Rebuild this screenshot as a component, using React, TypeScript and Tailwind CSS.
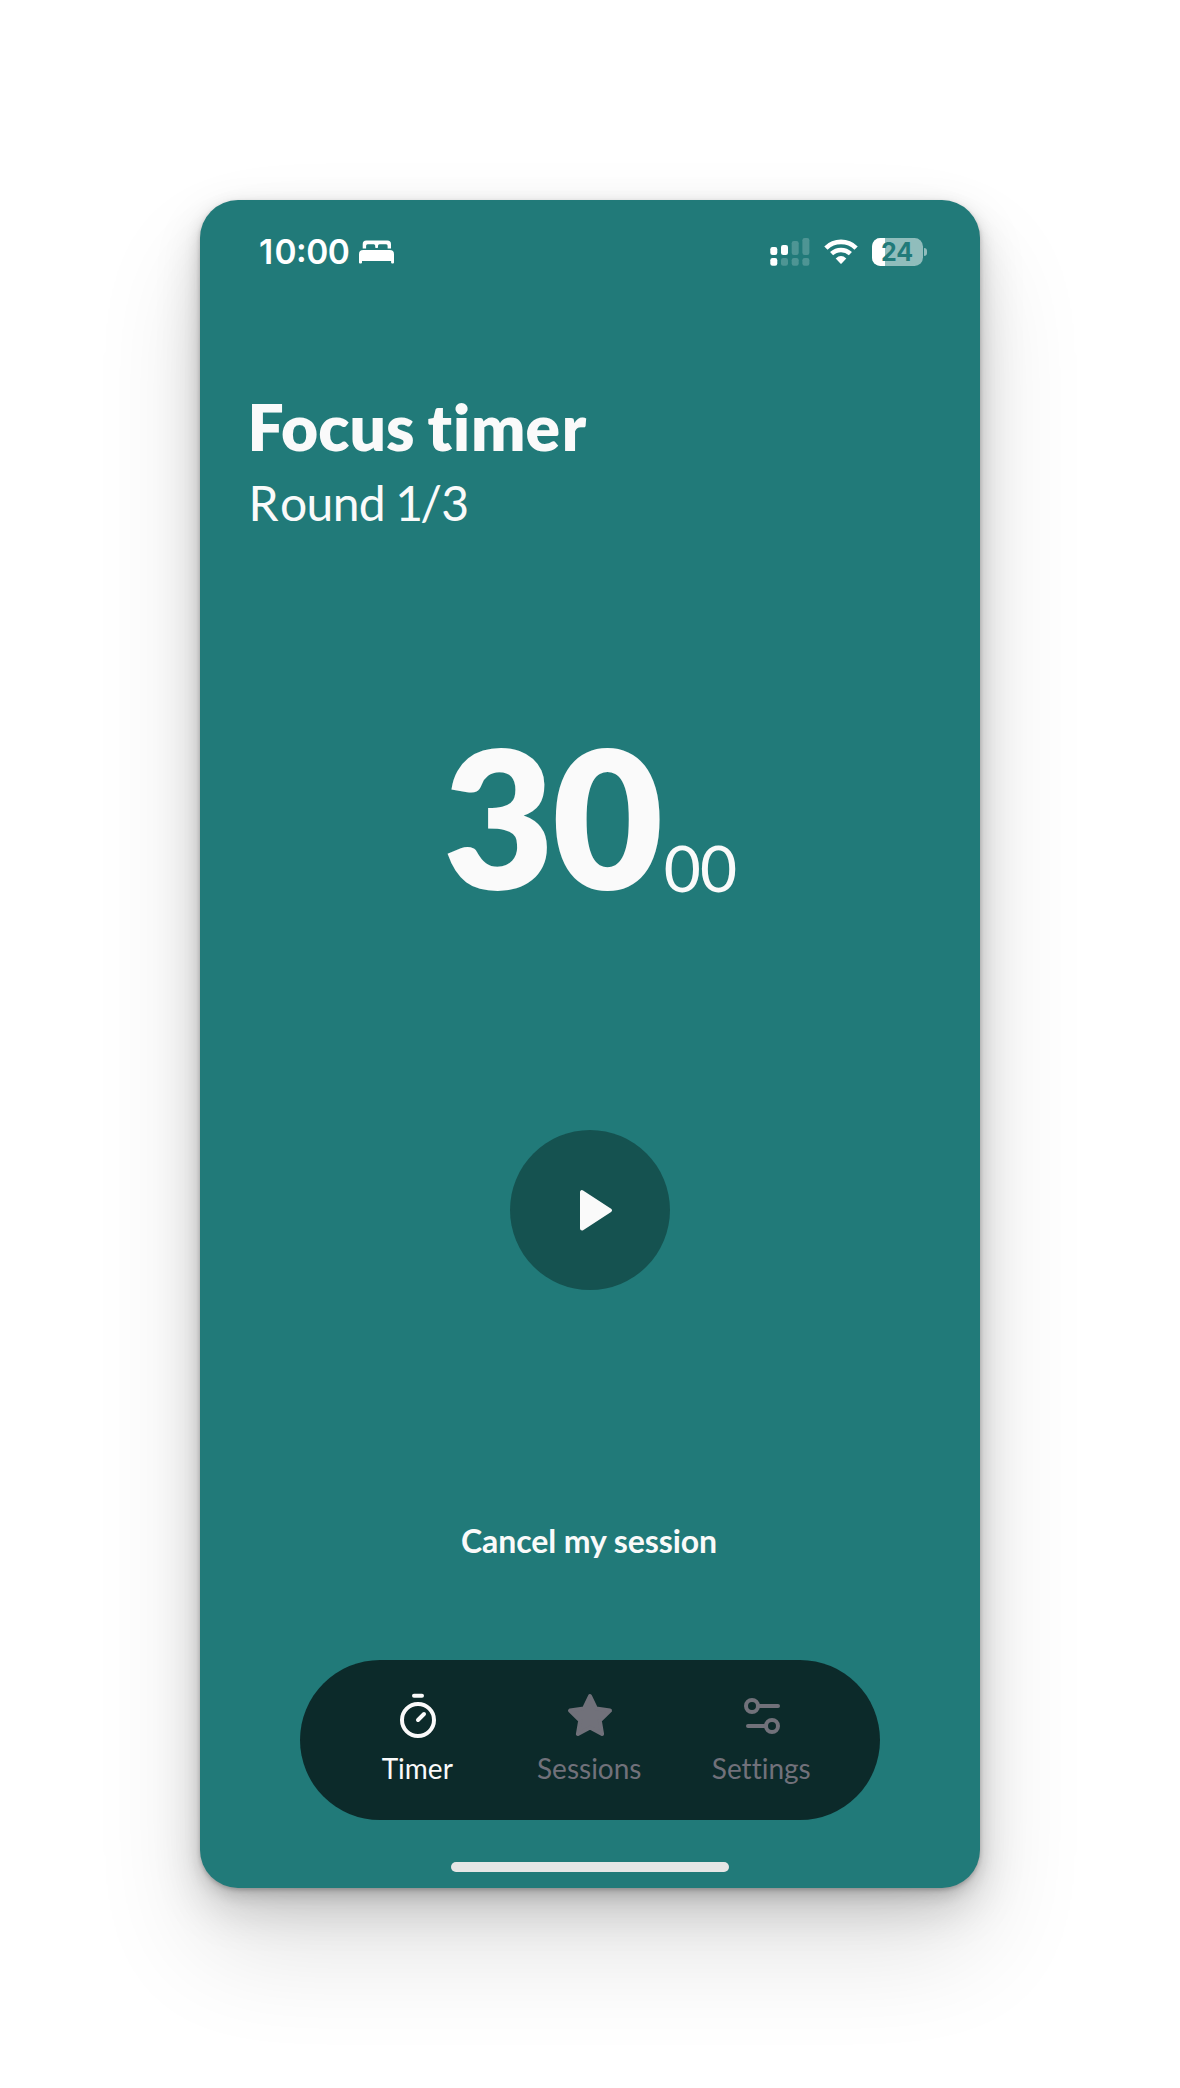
import React from "react";

function StatusBar() {
  return (
    <div className="mt-[26px] flex h-[52px] items-center pl-[59px] pr-[53px] text-white">
      <span className="w-[91px] whitespace-nowrap font-['Inter',sans-serif] text-[33.500px] font-semibold leading-[40px] tracking-[-0.500px]">
        <span className="tracking-[1.200px]">1</span>0<span className="relative -top-[2px]">:</span>00
      </span>
      <svg className="ml-[9px]" width="35" height="24" viewBox="0 0 35 24" fill="white">
        <path fillRule="evenodd" d="M3.700 8.400V4.200Q3.700.6 7.300.6H28.400Q32 .6 32 4.200V8.400H28.600V5.800Q28.600 4.300 27.100 4.300H20.500Q19 4.300 19 5.800V7.300Q19 8 18.300 8H16.900Q16.200 8 16.200 7.300V5.800Q16.200 4.300 14.700 4.300H8.600Q7.100 4.300 7.100 5.800V8.400Z" />
        <path d="M0 14.200Q0 10 4.200 10H30.800Q35 10 35 14.200V22.600q0 1-1 1h-.9q-1 0-1-1V21H3V22.600q0 1-1 1H1q-1 0-1-1z" />
      </svg>
      <svg className="ml-auto" width="40" height="28" viewBox="0 0 40 28" fill="white">
        <rect x="0.300" y="9" width="7" height="8" rx="2.200" />
        <rect x="11" y="7" width="7" height="10" rx="2.200" />
        <g opacity=".2">
          <rect x="21.700" y="3" width="7" height="14" rx="2.200" />
          <rect x="32.400" y="0" width="7" height="17" rx="2.200" />
          <rect x="11" y="20" width="7" height="7.700" rx="2.200" />
          <rect x="21.700" y="20" width="7" height="7.700" rx="2.200" />
          <rect x="32.400" y="20" width="7" height="7.700" rx="2.200" />
        </g>
        <rect x="0.300" y="20" width="7" height="7.700" rx="2.200" />
      </svg>
      <svg className="ml-[14px]" width="34" height="26" viewBox="0 0 34 26" fill="none">
        <path d="M1.900 9.100C10.300 .9 23.700 .9 32.100 9.100" stroke="white" strokeWidth="4.700" />
        <path d="M7.600 14.700C13 9.600 21 9.600 26.400 14.700" stroke="white" strokeWidth="4.500" />
        <path d="M11.700 19.400q5.300-4.600 10.600 0L17.600 24.400q-.6.500-1.200 0z" fill="white" />
      </svg>
      <div className="relative ml-[14px] h-7 w-[51px] overflow-hidden rounded-[8.500px] bg-white/50">
        <div className="h-full w-[13px] bg-white" />
        <span className="absolute left-[9px] top-0 font-['Inter',sans-serif] text-[25px] font-bold leading-[28px] text-[#217a79]">24</span>
      </div>
      <div className="ml-[1px] h-[8px] w-[3px] rounded-r-full bg-white/50" />
    </div>
  );
}

function TimerIcon() {
  return (
    <svg width="48" height="48" viewBox="0 0 48 48" fill="none" stroke="currentColor" strokeWidth="4" strokeLinecap="round">
      <circle cx="24" cy="28" r="16" />
      <path d="M20 3.800h8M24 28l6-6" />
    </svg>
  );
}

function StarIcon() {
  return (
    <svg width="48" height="48" viewBox="0 0 48 48" fill="currentColor" stroke="currentColor" strokeWidth="4" strokeLinejoin="round">
      <path d="M24 4l6 12.600 14 2-10.200 9.900 2.300 13.500L24 35.500 11.900 42l2.300-13.500L4 18.600l14-2z" />
    </svg>
  );
}

function SettingsIcon() {
  return (
    <svg width="48" height="48" viewBox="0 0 48 48" fill="none" stroke="currentColor" strokeWidth="4" strokeLinecap="round">
      <circle cx="14" cy="14" r="6" />
      <path d="M20 14h20M10 34h18" />
      <circle cx="34" cy="34" r="6" />
    </svg>
  );
}

function Tab({ icon, label, active = false }: { icon: React.ReactNode; label: string; active?: boolean }) {
  return (
    <button className={`flex w-[172px] flex-col items-center ${active ? "text-[#fafafa]" : "text-[#71717a]"}`}>
      {icon}
      <span className="mt-[11px] pr-[1.500px] text-[28px] leading-[34px]">{label}</span>
    </button>
  );
}

export default function App() {
  return (
    <div className="flex h-[2088px] w-[1180px] items-start justify-center overflow-hidden bg-white pt-[200px] font-['Lato',sans-serif] text-[#fafafa] [font-variant-ligatures:none]">
      <main className="flex h-[1688px] w-[780px] flex-col rounded-[38px] bg-[#217a79] shadow-[0_2px_4px_rgba(0,0,0,0.200),0_6px_16px_rgba(0,0,0,0.150),0_20px_45px_rgba(0,0,0,0.170),0_60px_110px_rgba(0,0,0,0.120)]">
        <StatusBar />
        <header className="mt-[109px] pl-[47.500px]">
          <h1 className="text-[64px] font-extrabold leading-[80px] tracking-[0.100px] [word-spacing:-2px]">
            Focus <span className="tracking-[0.900px]">ti</span>m<span className="tracking-[1.700px]">e</span>r
          </h1>
          <p className="mt-[7px] pl-[1px] text-[48px] leading-[58px] tracking-[-0.600px] [word-spacing:-1.500px]">
            <span className="tracking-[1.300px]">R</span>ound <span className="tracking-[-3px]">1</span>/3
          </p>
        </header>
        <div className="mt-[187px] flex h-[192px] justify-center">
          <span className="text-[192px] font-extrabold leading-[192px]">
            <span className="tracking-[-2.500px]">3</span>0
          </span>
          <span className="ml-[0.500px] mt-[117px] text-[64px] leading-[64px]">
            <span className="tracking-[-1px]">0</span>0
          </span>
        </div>
        <button className="mx-auto mt-[219px] flex size-[160px] items-center justify-center rounded-full bg-[#155250]">
          <svg width="48" height="48" viewBox="0 0 48 48" fill="currentColor" stroke="currentColor" strokeWidth="4" strokeLinejoin="round">
            <path d="M16 6.200v36.400l28-18.200z" />
          </svg>
        </button>
        <button className="mx-auto mt-[231px] pr-[2px] text-[32px] font-bold leading-[40px] tracking-[-0.080px]">Cancel my session</button>
        <nav className="mx-auto mt-[99px] flex h-[160px] w-[580px] justify-center rounded-full bg-[#0c2a2a] pt-[32px]">
          <Tab icon={<TimerIcon />} label="Timer" active />
          <Tab icon={<StarIcon />} label="Sessions" />
          <Tab icon={<SettingsIcon />} label="Settings" />
        </nav>
        <div className="mx-auto mt-[42px] h-[10px] w-[278px] rounded-full bg-[#e6e6e6]" />
      </main>
    </div>
  );
}
